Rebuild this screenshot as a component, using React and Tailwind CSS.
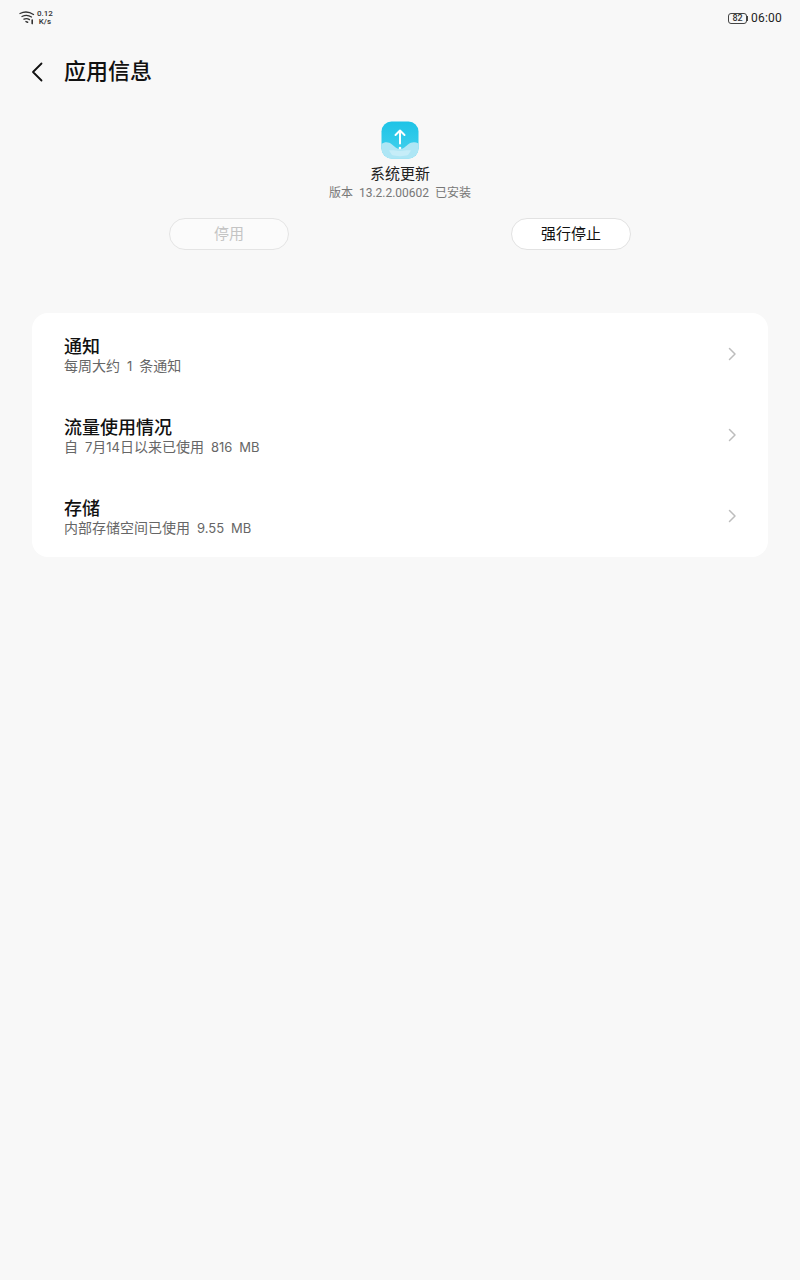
const cjk = "font-['Roboto','Noto_Sans_CJK_SC',sans-serif]";

const rows = [
  { title: "通知", sub: "每周大约 1 条通知" },
  { title: "流量使用情况", sub: "自 7月14日以来已使用 816 MB" },
  { title: "存储", sub: "内部存储空间已使用 9.55 MB" },
];

const WifiIcon = () => (
  <svg width="16" height="14" viewBox="0 0 16 14" fill="none" stroke="#333" strokeLinecap="round">
    <path d="M1 2.5C5 .5 10 .5 14.5 3.5" strokeWidth="1.3" />
    <path d="M3 5.5C6 4 9.5 4 12.5 6" strokeWidth="1.3" />
    <path d="M5 8.2C6.8 7.3 8.5 7.4 10.5 8.6" strokeWidth="1.3" />
    <path d="M7 10.6L8.6 11.2" strokeWidth="1.5" />
    <path d="M13.2 9V12.6" strokeWidth="1.6" />
  </svg>
);

const AppIcon = () => (
  <svg width="38" height="38" viewBox="0 0 38 38">
    <defs>
      <linearGradient id="skyGrad" x1="0" y1="0" x2="0" y2="1">
        <stop offset="0" stopColor="#1fc3e6" />
        <stop offset="1" stopColor="#45d2ee" />
      </linearGradient>
    </defs>
    <rect x="0.5" y="0.5" width="37" height="37" rx="10" fill="url(#skyGrad)" />
    <path d="M0.5 23C4 20.5 8 21 11 23.5C14 26 16 28 19 28C22 28 24 26 27 23.5C30 21 34 20.5 37.5 22.5V27.5C37.5 33 33 37.5 27.5 37.5H10.5C5 37.5 0.5 33 0.5 27.5Z" fill="#aee6f5" />
    <path d="M8 29.5C12 29 15 30 19 30C23 30 26 29 30 29.5L27 34C23 35.5 15 35.5 11 34Z" fill="#c6edf8" />
    <path d="M19 22.5V9.5M14.5 14L19 9.5L23.5 14" fill="none" stroke="#fff" strokeWidth="2" strokeLinecap="round" strokeLinejoin="round" />
    <circle cx="19" cy="27" r="1.3" fill="#fff" />
  </svg>
);

const Chevron = () => (
  <svg width="10" height="14" viewBox="0 0 10 14" fill="none" stroke="#bdbdbd" strokeWidth="1.5" strokeLinecap="round" strokeLinejoin="round">
    <path d="M2.5 1.5L8 7L2.5 12.5" />
  </svg>
);

// digits and units are a little narrower than the CJK text around them
const SubText = ({ text }) => (
  <>
    {text.split(/([0-9.]+|MB)/).map((part, i) =>
      i % 2 === 1 ? (
        <span key={i} className="font-['Inter',sans-serif] text-[13px]">{part}</span>
      ) : (
        <span key={i}>{part.replace(/ /g, "  ")}</span>
      )
    )}
  </>
);

export default function App() {
  return (
    <div className={`w-[800px] h-[1280px] bg-[#f8f8f8] overflow-hidden ${cjk}`}>
      {/* status bar */}
      <div className="h-9 pl-[19px] pr-[18px] flex items-center justify-between">
        <div className="flex items-center gap-[2px]">
          <WifiIcon />
          <div className="flex flex-col items-center text-[8px] leading-[8px] font-medium text-[#333]">
            <span>0.12</span>
            <span>K/s</span>
          </div>
        </div>
        <div className="flex items-center gap-[3px]">
          <div className="flex items-center">
            <div className="w-[19px] h-[11px] border border-[#444] rounded-[3px] flex items-center justify-center text-[9px] leading-none font-medium text-[#333]">82</div>
            <div className="w-px h-[5px] bg-[#444]"></div>
          </div>
          <span className="text-[12px] leading-none text-[#222] tracking-[0.2px]">06:00</span>
        </div>
      </div>

      {/* header */}
      <div className="h-[72px] pl-[30px] flex items-center">
        <svg width="13" height="20" viewBox="0 0 13 20" fill="none" stroke="#111" strokeWidth="1.8" strokeLinecap="round" strokeLinejoin="round">
          <path d="M11.5 1.5L3 10L11.5 18.5" />
        </svg>
        <h1 className="ml-[21px] text-[22px] leading-none font-medium text-[#111]">应用信息</h1>
      </div>

      {/* app summary */}
      <div className="mt-[13px] flex flex-col items-center">
        <AppIcon />
        <div className="mt-[5px] text-[15px] leading-5 text-[#222]">系统更新</div>
        <div className="mt-px text-[12px] leading-4 text-[#777] whitespace-pre">版本  13.2.2.00602  已安装</div>
      </div>

      {/* buttons */}
      <div className="mt-[17px] px-[169px] flex justify-between">
        <div className="w-[120px] h-8 rounded-full border border-[#e4e4e4] bg-[#fbfbfb] flex items-center justify-center text-[15px] text-[#c4c4c4]">停用</div>
        <div className="w-[120px] h-8 rounded-full border border-[#e2e2e2] bg-white flex items-center justify-center text-[15px] text-[#111]">强行停止</div>
      </div>

      {/* list card */}
      <div className="mt-[63px] mx-[32px] h-[244px] bg-white rounded-[16px] flex flex-col">
        {rows.map((row) => (
          <div key={row.title} className="h-[81px] pl-[32px] pr-[31px] flex items-center justify-between">
            <div className="pt-[4px]">
              <div className="text-[18px] leading-[21px] font-medium text-[#111]">{row.title}</div>
              <div className="text-[14px] leading-[19px] text-[#666] whitespace-pre"><SubText text={row.sub} /></div>
            </div>
            <Chevron />
          </div>
        ))}
      </div>
    </div>
  );
}
